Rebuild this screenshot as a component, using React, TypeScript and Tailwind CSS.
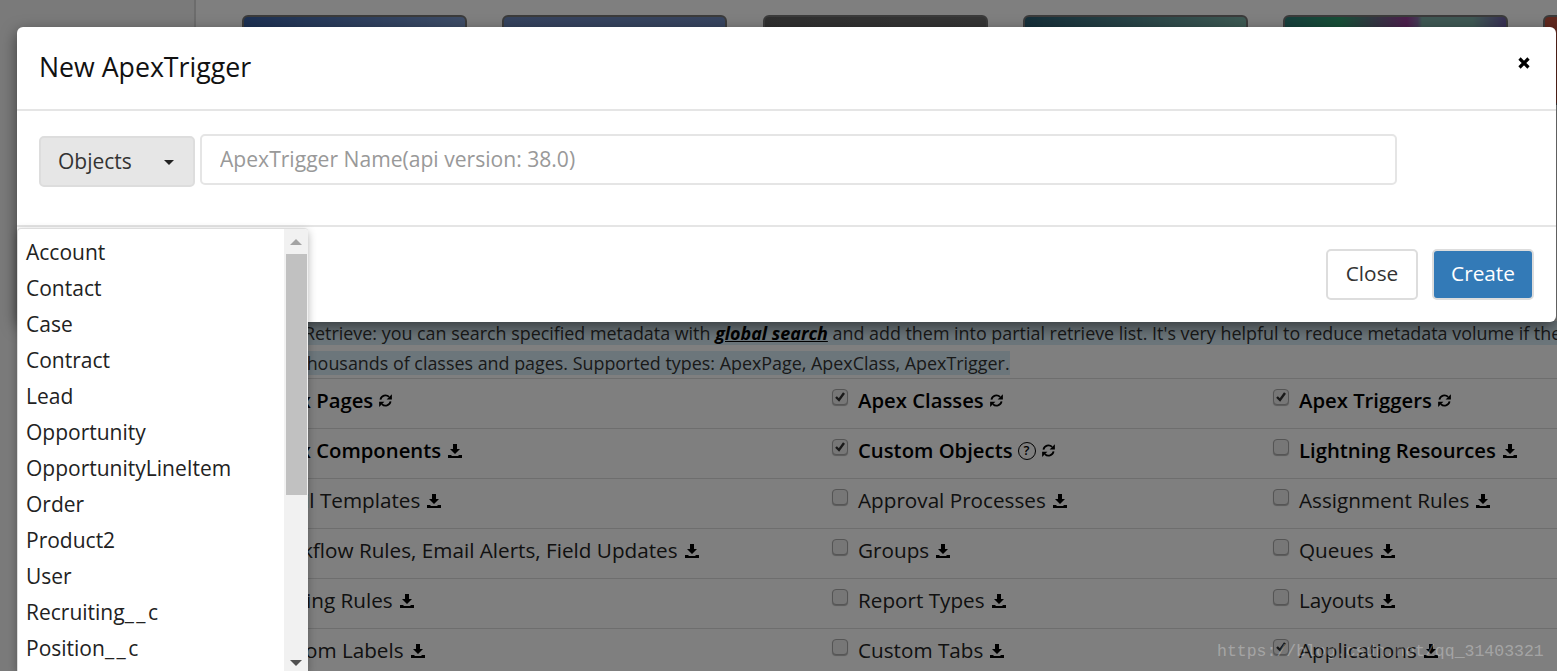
const cards = [
  'bg-gradient-to-r from-[#3a62a8] to-[#7d9bd0]',
  'bg-gradient-to-r from-[#6b86bd] to-[#6f8ac0]',
  'bg-gradient-to-r from-[#5f5f5f] to-[#6b6b6b]',
  'bg-gradient-to-r from-[#2b5f74] to-[#7cb4a8]',
  'bg-[linear-gradient(90deg,#2f7f7a_0%,#2f9f6f_25%,#9a3f9a_55%,#8a6fa8_60%,#7fb0a8_62%,#7fb0a8_85%,#6f5fa8_100%)]',
  'bg-gradient-to-r from-[#c0503c] to-[#c0503c]',
]

const rows = [
  [
    { label: 'Apex Pages', bold: true, sync: true },
    { label: 'Apex Classes', bold: true, checked: true, sync: true },
    { label: 'Apex Triggers', bold: true, checked: true, sync: true },
  ],
  [
    { label: 'Apex Components', bold: true, save: true },
    { label: 'Custom Objects', bold: true, checked: true, help: true, sync: true },
    { label: 'Lightning Resources', bold: true, save: true },
  ],
  [
    { label: 'Email Templates', save: true },
    { label: 'Approval Processes', save: true },
    { label: 'Assignment Rules', save: true },
  ],
  [
    { label: 'Workflow Rules, Email Alerts, Field Updates', save: true },
    { label: 'Groups', save: true },
    { label: 'Queues', save: true },
  ],
  [
    { label: 'Sharing Rules', save: true },
    { label: 'Report Types', save: true },
    { label: 'Layouts', save: true },
  ],
  [
    { label: 'Custom Labels', save: true },
    { label: 'Custom Tabs', save: true },
    { label: 'Applications', checked: true, save: true },
  ],
]

const objects = [
  'Account',
  'Contact',
  'Case',
  'Contract',
  'Lead',
  'Opportunity',
  'OpportunityLineItem',
  'Order',
  'Product2',
  'User',
  'Recruiting__c',
  'Position__c',
]

function SaveIcon() {
  return (
    <svg viewBox="0 0 14 14" className="ml-[7px] h-[14px] w-[14px] shrink-0 text-black">
      <path d="M5 0h4v5h3L7 10 2 5h3z" fill="currentColor" />
      <path d="M0 11h3l1 1h6l1-1h3v3H0z" fill="currentColor" />
    </svg>
  )
}

function SyncIcon() {
  return (
    <svg viewBox="0 0 16 16" className="ml-[5px] h-[15px] w-[15px] shrink-0 text-black" fill="none">
      <path d="M2.6 7a5.4 5.4 0 0 1 9.2-2.8" stroke="currentColor" strokeWidth="1.9" />
      <path d="M13.4 9a5.4 5.4 0 0 1-9.2 2.8" stroke="currentColor" strokeWidth="1.9" />
      <path d="M14.8 1.2v5.6H9.2z" fill="currentColor" />
      <path d="M1.2 14.8V9.2h5.6z" fill="currentColor" />
    </svg>
  )
}

function HelpIcon() {
  return (
    <span className="ml-[5px] flex h-[18px] w-[18px] shrink-0 items-center justify-center rounded-full border-[1.5px] border-black text-[13px] leading-none font-semibold text-black">
      ?
    </span>
  )
}

function Cell({ item }: { item: { label: string; bold?: boolean; checked?: boolean; save?: boolean; sync?: boolean; help?: boolean } }) {
  return (
    <div className="flex h-full items-center pb-[6px]">
      <span className="mb-[8px] mr-[10px] flex h-[16px] w-[16px] shrink-0 items-center justify-center rounded-[4px] border border-[#aaa] bg-[#eee] shadow-[0_1px_1px_rgba(0,0,0,0.3)]">
        {item.checked ? (
          <svg viewBox="0 0 12 12" className="h-[12px] w-[12px]">
            <path d="M2 6l3 3 5-7" fill="none" stroke="#333" strokeWidth="2.4" />
          </svg>
        ) : null}
      </span>
      <span className={`whitespace-nowrap ${item.bold ? 'text-[20.3px] font-semibold text-black' : 'text-[20.7px] text-[#222]'}`}>
        {item.label}
      </span>
      {item.help ? <HelpIcon /> : null}
      {item.sync ? <SyncIcon /> : null}
      {item.save ? <SaveIcon /> : null}
    </div>
  )
}

function BackgroundPage() {
  return (
    <div className="flex h-[671px] w-[1557px] overflow-hidden bg-white">
      <div className="w-[196px] shrink-0 border-r-2 border-[#d8d8d8] bg-[#f5f5f5]" />
      <div className="min-w-0 flex-1">
        <div className="flex gap-[35.25px] pl-[46px] pt-[15px]">
          {cards.map((card, i) => (
            <div key={i} className={`h-[90px] w-[225px] shrink-0 rounded-[6px] border-2 border-[#777] ${card}`} />
          ))}
        </div>
        <p className="mt-[213px] h-[60px] whitespace-nowrap pl-[50px] text-[17.9px] leading-[30px] text-[#333]">
          <span className="bg-[#d9edf7]">
            Partial Retrieve: you can search specified metadata with{' '}
            <a className="font-bold italic text-black underline">global search</a> and add them into partial retrieve
            list. It's very helpful to reduce metadata volume if the
            <br />
            it&nbsp; has thousands of classes and pages. Supported types: ApexPage, ApexClass, ApexTrigger.
          </span>
        </p>
        <div className="pl-[40px]">
          {rows.map((row, i) => (
            <div key={i} className="grid h-[50px] grid-cols-[596px_441px_1fr] border-t border-[#ddd]">
              {row.map((item) => (
                <Cell key={item.label} item={item} />
              ))}
            </div>
          ))}
        </div>
      </div>
    </div>
  )
}

function ObjectName({ name }: { name: string }) {
  const [head, tail] = name.split('__')
  if (tail === undefined) return <>{name}</>
  return (
    <>
      {head}
      <span className="tracking-[2.5px]">__</span>
      {tail}
    </>
  )
}

function ObjectsDropdown() {
  return (
    <div className="absolute left-0 top-[201px] flex h-[443px] w-[291px] overflow-hidden rounded-t-[4px] border-l border-t border-[#ddd] bg-white shadow-[0_3px_8px_rgba(0,0,0,0.3)]">
      <ul className="min-w-0 flex-1 pt-[6px]">
        {objects.map((name) => (
          <li key={name} className="flex h-[36px] items-center pl-[8px] text-[21px] text-[#222]">
            <span>
              <ObjectName name={name} />
            </span>
          </li>
        ))}
      </ul>
      <div className="flex w-[24px] shrink-0 flex-col items-center bg-[#f1f1f1]">
        <div className="mt-[10px] h-0 w-0 border-x-[6px] border-b-[6px] border-x-transparent border-b-[#a3a3a3]" />
        <div className="mt-[9px] h-[241px] w-[21px] bg-[#c1c1c1]" />
        <div className="mt-[165px] h-0 w-0 border-x-[6px] border-t-[6px] border-x-transparent border-t-[#505050]" />
      </div>
    </div>
  )
}

function TriggerModal() {
  return (
    <div className="absolute left-[17px] top-[27px] w-[1539px] rounded-[6px] bg-white shadow-[0_5px_15px_rgba(0,0,0,0.5)]">
      <div className="flex h-[84px] items-center justify-between border-b-2 border-[#e5e5e5] pl-[22px] pr-[26px]">
        <h4 className="mb-[2px] text-[26.7px] text-[#111]">New ApexTrigger</h4>
        <svg viewBox="0 0 12 12" className="mb-[10px] h-[12px] w-[12px]">
          <path d="M1.5 1.5l9 9M10.5 1.5l-9 9" stroke="#000" strokeWidth="3.2" fill="none" />
        </svg>
      </div>
      <div className="flex h-[116px] items-start gap-[5px] border-b-2 border-[#e5e5e5] pl-[22px] pt-[23px]">
        <div className="mt-[2px] flex h-[51px] w-[156px] items-center rounded-[5px] border-2 border-[#ddd] bg-[#e6e6e6] pl-[17px] text-[21px] text-[#333]">
          Objects
          <span className="ml-[32px] mt-[2px] h-0 w-0 border-x-[5.5px] border-t-[5.5px] border-x-transparent border-t-[#222]" />
        </div>
        <input
          placeholder="ApexTrigger Name(api version: 38.0)"
          className="h-[51px] w-[1197px] rounded-[5px] border-2 border-[#e5e5e5] bg-white pb-[2px] pl-[18px] text-[21.1px] outline-none placeholder:text-[#999]"
        />
      </div>
      <div className="flex h-[95px] items-start justify-end gap-[14px] pr-[22px] pt-[22px]">
        <button className="h-[51px] w-[92px] rounded-[5px] border-2 border-[#ddd] bg-white pb-[2px] text-[20.8px] text-[#333]">Close</button>
        <button className="h-[51px] w-[102px] rounded-[5px] border-2 border-[#ddd] bg-[#337ab7] pb-[2px] text-[20.8px] text-white">Create</button>
      </div>
      <ObjectsDropdown />
    </div>
  )
}

export default function App() {
  return (
    <div className="relative h-[671px] w-[1557px] overflow-hidden font-['Open_Sans',sans-serif]">
      <BackgroundPage />
      <div className="absolute inset-0 bg-black/50" />
      <TriggerModal />
      <span className="absolute left-[1217px] top-[642px] font-['Liberation_Mono',monospace] text-[16.5px] leading-[20px] whitespace-nowrap text-white/30">
        https://blog.csdn.net/qq_31403321
      </span>
    </div>
  )
}
